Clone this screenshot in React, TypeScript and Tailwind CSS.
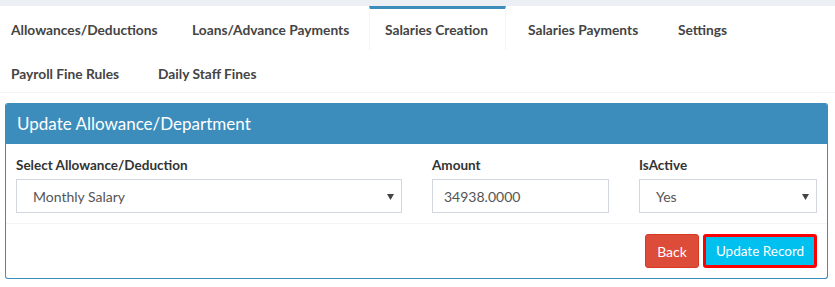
import React from "react";

const Arrow = () => (
  <svg width="7" height="6" viewBox="0 0 7 6" className="absolute right-[7px] top-[14px]">
    <polygon points="0,0 7,0 3.5,6" fill="#444" />
  </svg>
);

type T = { label: string; w: string; active?: boolean };

export default function App() {
  const row1: T[] = [
    { label: "Allowances/Deductions", w: "w-[175px]" },
    { label: "Loans/Advance Payments", w: "w-[187px]" },
    { label: "Salaries Creation", w: "w-[137px]", active: true },
    { label: "Salaries Payments", w: "w-[144px]" },
    { label: "Settings", w: "w-[82px]" },
  ];
  const row2: T[] = [
    { label: "Payroll Fine Rules", w: "w-[141px]" },
    { label: "Daily Staff Fines", w: "w-[130px]" },
  ];
  const Tab = ({ label, active, w }: T) => (
    <li
      className={
        "mr-[6px] shrink-0 list-none border-t-[3px] whitespace-nowrap " +
        w +
        " " +
        (active ? "border-t-[#3c8dbc] border-x border-x-[#f4f4f4]" : "border-t-transparent border-x border-x-transparent")
      }
    >
      <span className="block px-[15px] pt-[11px] pb-[10px] leading-[20px] text-[13.75px] font-bold text-[#444]">{label}</span>
    </li>
  );
  return (
    <div className="w-[835px] h-[287px] bg-white overflow-hidden" style={{ fontFamily: "Lato, 'Liberation Sans', sans-serif" }}>
      <div className="h-[6px] bg-[#ecf0f5]" />
      <div className="border-b border-[#f4f4f4]">
        <ul className="flex ml-[-5px] h-[44px]">
          {row1.map((t) => (
            <Tab key={t.label} {...t} />
          ))}
        </ul>
        <ul className="flex ml-[-5px] h-[42px]">
          {row2.map((t) => (
            <Tab key={t.label} {...t} />
          ))}
        </ul>
      </div>
      <div className="ml-[5px] mt-[10px] w-[823px] rounded-[3px] border border-t-0 border-[#3c8dbc] overflow-hidden">
        <div className="h-[41px] bg-[#3c8dbc] px-[11px] flex items-center">
          <h3 className="text-[17px] leading-[20px] text-white font-normal">Update Allowance/Department</h3>
        </div>
        <div className="pt-[11px] px-[10px] pb-[10px] grid grid-cols-[386px_177px_178px] gap-x-[30px]">
          <div>
            <label className="block text-[13.5px] leading-[20px] font-bold text-[#333] mb-[4px]">Select Allowance/Deduction</label>
            <div className="relative h-[34px] border border-[#d2d6de] pl-[16px] flex items-center text-[14px] text-[#555]">
              Monthly Salary
              <Arrow />
            </div>
          </div>
          <div>
            <label className="block text-[13.5px] leading-[20px] font-bold text-[#333] mb-[4px]">Amount</label>
            <div className="h-[34px] border border-[#d2d6de] pl-[11px] flex items-center text-[14px] text-[#555]">
              34938.0000
            </div>
          </div>
          <div>
            <label className="block text-[13.5px] leading-[20px] font-bold text-[#333] mb-[4px]">IsActive</label>
            <div className="relative h-[34px] border border-[#d2d6de] pl-[16px] flex items-center text-[14px] text-[#555]">
              Yes
              <Arrow />
            </div>
          </div>
        </div>
        <div className="border-t border-[#f4f4f4] p-[10px] flex justify-end gap-[4px]">
          <button className="h-[34px] w-[54px] rounded-[3px] bg-[#dd4b39] border border-[#d73925] text-white text-[14px]">Back</button>
          <button className="h-[34px] w-[114px] rounded-[3px] bg-[#00c0ef] border-[3px] border-[#ff0000] text-white text-[13.5px]">Update Record</button>
        </div>
      </div>
    </div>
  );
}
